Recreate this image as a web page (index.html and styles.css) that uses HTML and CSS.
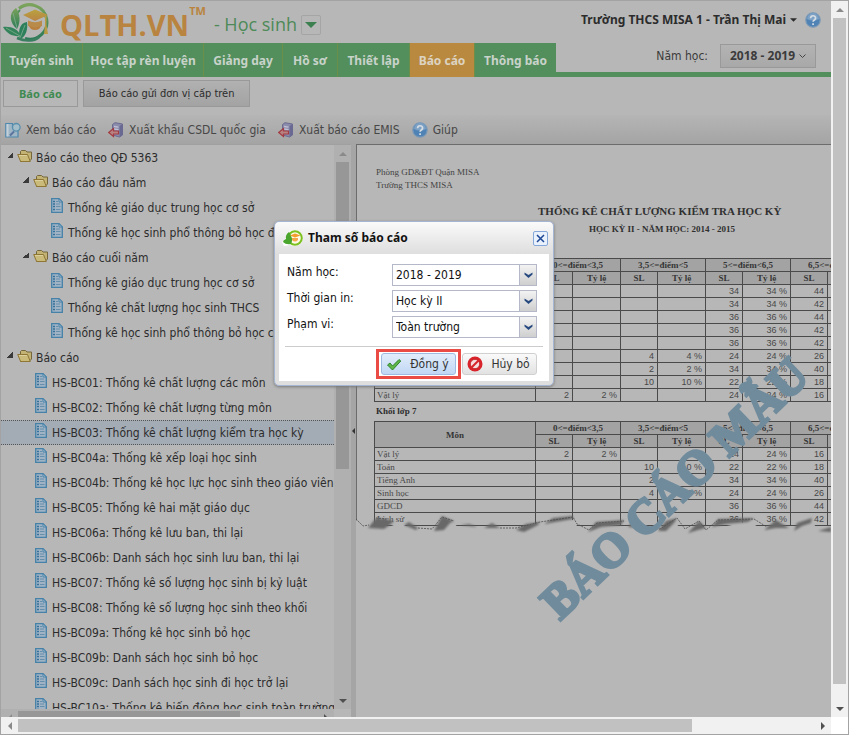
FILE: index.html
```html
<!DOCTYPE html>
<html lang="vi">
<head>
<meta charset="utf-8">
<title>QLTH.VN - Báo cáo</title>
<link rel="stylesheet" href="styles.css">
</head>
<body>
<svg class="defs" aria-hidden="true">
  <symbol id="folder" viewBox="0 0 16 14">
    <path d="M3.5 11.5V2.5L4.500 1.500H8.500L10 3H14.500V10L12 12.500H3.500z" fill="#c2b375" stroke="#75673b"/>
    <path d="M.7 5.500H10.500L13.300 12.500H3.600z" fill="#cbbb7a" stroke="#8f7634"/>
    <path d="M2 6.500H10" stroke="#dbd09c"/>
  </symbol>
  <symbol id="doc" viewBox="0 0 12 15">
    <path d="M.7.7H8L11.300 4V14.300H.7z" fill="#9fb3c4" stroke="#4681a8" stroke-width="1.300"/>
    <path d="M8 .7V4H11.300z" fill="#b5c4d0" stroke="#4681a8"/>
    <path d="M2 3.500H4M2 6H4M2 8.500H4M2 11.500H4" stroke="#37719b" stroke-width="1.500"/>
    <path d="M5 3.500H7M5 6H9M5 8.500H9.500M5 11.500H9.500" stroke="#668fac"/>
  </symbol>
  <symbol id="help" viewBox="0 0 16 16">
    <circle cx="8" cy="8" r="7.200" fill="#5083b5" stroke="#7998b6" stroke-width="1.200"/>
    <path d="M2 7a6 6 0 0 1 12 0q-6 3-12 0z" fill="#7ca1c4"/>
    <path d="M5.600 6.200c0-3.300 5-3.200 5-.2 0 2-2.500 1.900-2.500 3.800M8.100 11.300v1.700" fill="none" stroke="#d5dce3" stroke-width="1.700"/>
  </symbol>
  <symbol id="export" viewBox="0 0 16 16">
    <path d="M4.500 2.500L7 .7 14.500 2V13L11.500 15 4.500 13z" fill="#8b8cac" stroke="#6b6a91"/>
    <path d="M11.500 4V15L14.500 13V2z" fill="#696993"/>
    <path d="M6 4.500L10.500 5.200M6 7L10.500 7.700" stroke="#c0c0d4" stroke-width="1.300"/>
    <path d="M.7 10.500L5.500 6.500V9H10.500V12H5.500V14.500z" fill="#b98383" stroke="#a33c42" stroke-width="1.200"/>
  </symbol>
  <symbol id="view" viewBox="0 0 16 16">
    <path d="M.8 1.500H7.500V5.500H9.500L13 9V15H.8z" fill="#9fb6c6" stroke="#4f88ae" stroke-width="1.200"/>
    <path d="M2.500 2V14.500" stroke="#c3d0d8" stroke-width="2"/>
    <path d="M9 9.500L5 13.500" stroke="#5b739d" stroke-width="2"/>
    <circle cx="11.300" cy="5.300" r="3.800" fill="#a3bdc9" stroke="#598fac" stroke-width="1.300"/>
  </symbol>
  <symbol id="down" viewBox="0 0 8 4"><path d="M0 0H8L4 4z" fill="currentColor"/></symbol>
</svg>

<div class="window">
  <main class="app">
    <header class="top">
      <div class="brand">
        <svg class="logo" viewBox="0 0 50 40" aria-hidden="true">
          <defs><linearGradient id="lg" x1="0" y1="0" x2="0" y2="1"><stop offset="0" stop-color="#7ba35a"/><stop offset="1" stop-color="#2b7a59"/></linearGradient>
          <linearGradient id="cap" x1="0" y1="0" x2="0" y2="1"><stop offset="0" stop-color="#b9a23f"/><stop offset="1" stop-color="#b98445"/></linearGradient></defs>
          <path d="M16 5.500A17.200 17.200 0 1 1 22 35.500" fill="none" stroke="url(#lg)" stroke-width="3"/>
          <path d="M17 7Q10 13 13 24" fill="none" stroke="#4d8f58" stroke-width="2"/>
          <path d="M13 5C5 10 7 21 14 26 18 19 17 10 13 5z" fill="url(#lg)"/>
          <path d="M24 19C16 20 15 29 17 36 23 34 25 26 24 19z" fill="#2d805c"/>
          <path d="M0 24C8 23 15 26 18 33 10 34 4 31 0 24z" fill="#34845b"/>
          <path d="M10 10L14 25M22 22L17 35M3 25L17 33" stroke="#8db395" stroke-width=".7" fill="none"/>
          <path d="M14 35C23 39 32 38 36 34" fill="none" stroke="#3a7f60" stroke-width="2.500"/>
          <path d="M20 12L32 6.500 45 12 32 18z" fill="url(#cap)"/>
          <path d="M25 17.500Q32 21 39 17.500V23Q32 26 25 23z" fill="#b98b4b"/>
          <path d="M26 22.500Q32 26 38 22.500 37 27 32 27 27 27 26 22.500z" fill="#b8803f"/>
          <path d="M42 13V22L41 31H45L43.500 22V13z" fill="#b99a45"/>
        </svg>
        <span class="brand-name">QLTH.VN</span><span class="tm">TM</span>
        <span class="brand-module">- Học sinh</span>
        <button class="module-btn" aria-label="Chọn phân hệ"><svg class="module-caret"><use href="#down"/></svg></button>
      </div>
      <div class="user">
        <b>Trường THCS MISA 1 - Trần Thị Mai</b>
        <svg class="user-caret"><use href="#down"/></svg>
        <svg class="i16 user-help"><use href="#help"/></svg>
      </div>
    </header>
    <div class="nav-row">
      <nav class="nav">
        <a href="#">Tuyển sinh</a><a href="#">Học tập rèn luyện</a><a href="#">Giảng dạy</a><a href="#">Hồ sơ</a><a href="#">Thiết lập</a><a href="#" class="active">Báo cáo</a><a href="#">Thông báo</a>
      </nav>
      <div class="year">
        <span>Năm học:</span>
        <button class="year-btn">2018 - 2019
          <svg class="chev" viewBox="0 0 7 5"><path d="M.5.500L3.500 3.500 6.500.5" fill="none" stroke="#444"/></svg></button>
      </div>
    </div>
    <div class="subtabs">
      <button class="subtab current">Báo cáo</button>
      <button class="subtab">Báo cáo gửi đơn vị cấp trên</button>
    </div>
    <div class="toolbar">
      <button><svg class="i16"><use href="#view"/></svg>Xem báo cáo</button>
      <button><svg class="i16"><use href="#export"/></svg>Xuất khẩu CSDL quốc gia</button>
      <button><svg class="i16"><use href="#export"/></svg>Xuất báo cáo EMIS</button>
      <button><svg class="i16"><use href="#help"/></svg>Giúp</button>
    </div>

    <div class="content">
      <div class="tree-panel">
        <ul class="tree">
          <li class="node open"><svg class="folder"><use href="#folder"/></svg>Báo cáo theo QĐ 5363</li>
          <li class="node open l1"><svg class="folder"><use href="#folder"/></svg>Báo cáo đầu năm</li>
          <li class="node l2"><svg class="doc"><use href="#doc"/></svg>Thống kê giáo dục trung học cơ sở</li>
          <li class="node l2"><svg class="doc"><use href="#doc"/></svg>Thống kê học sinh phổ thông bỏ học đ</li>
          <li class="node open l1"><svg class="folder"><use href="#folder"/></svg>Báo cáo cuối năm</li>
          <li class="node l2"><svg class="doc"><use href="#doc"/></svg>Thống kê giáo dục trung học cơ sở</li>
          <li class="node l2"><svg class="doc"><use href="#doc"/></svg>Thống kê chất lượng học sinh THCS</li>
          <li class="node l2"><svg class="doc"><use href="#doc"/></svg>Thống kê học sinh phổ thông bỏ học c</li>
          <li class="node open"><svg class="folder"><use href="#folder"/></svg>Báo cáo</li>
          <li class="node leaf"><svg class="doc"><use href="#doc"/></svg>HS-BC01: Thống kê chất lượng các môn</li>
          <li class="node leaf"><svg class="doc"><use href="#doc"/></svg>HS-BC02: Thống kê chất lượng từng môn</li>
          <li class="node leaf selected"><svg class="doc"><use href="#doc"/></svg>HS-BC03: Thống kê chất lượng kiểm tra học kỳ</li>
          <li class="node leaf"><svg class="doc"><use href="#doc"/></svg>HS-BC04a: Thống kê xếp loại học sinh</li>
          <li class="node leaf"><svg class="doc"><use href="#doc"/></svg>HS-BC04b: Thống kê học lực học sinh theo giáo viên</li>
          <li class="node leaf"><svg class="doc"><use href="#doc"/></svg>HS-BC05: Thống kê hai mặt giáo dục</li>
          <li class="node leaf"><svg class="doc"><use href="#doc"/></svg>HS-BC06a: Thống kê lưu ban, thi lại</li>
          <li class="node leaf"><svg class="doc"><use href="#doc"/></svg>HS-BC06b: Danh sách học sinh lưu ban, thi lại</li>
          <li class="node leaf"><svg class="doc"><use href="#doc"/></svg>HS-BC07: Thống kê số lượng học sinh bị kỷ luật</li>
          <li class="node leaf"><svg class="doc"><use href="#doc"/></svg>HS-BC08: Thống kê số lượng học sinh theo khối</li>
          <li class="node leaf"><svg class="doc"><use href="#doc"/></svg>HS-BC09a: Thống kê học sinh bỏ học</li>
          <li class="node leaf"><svg class="doc"><use href="#doc"/></svg>HS-BC09b: Danh sách học sinh bỏ học</li>
          <li class="node leaf"><svg class="doc"><use href="#doc"/></svg>HS-BC09c: Danh sách học sinh đi học trở lại</li>
          <li class="node leaf"><svg class="doc"><use href="#doc"/></svg>HS-BC10a: Thống kê biến động học sinh toàn trường</li>
        </ul>
        <div class="vbar dim"><i class="arrow up"></i><i class="thumb"></i><i class="arrow down"></i></div>
        <div class="hbar dim"><i class="arrow left"></i><i class="thumb"></i><i class="arrow right"></i></div>
      </div>
      <div class="splitter"><i class="arrow left"></i></div>
      <section class="report">
        <div class="paper">
          <p class="org">Phòng GD&amp;ĐT Quận MISA<br>Trường THCS MISA</p>
          <h1>THỐNG KÊ CHẤT LƯỢNG KIỂM TRA HỌC KỲ</h1>
          <h2>HỌC KỲ II - NĂM HỌC: 2014 - 2015</h2>
          <table class="marks">
            <colgroup><col class="c-name"><col class="c-sl"><col class="c-pc"><col class="c-sl"><col class="c-pc"><col class="c-sl"><col class="c-pc"><col class="c-sl"><col class="c-pc"></colgroup>
            <thead>
              <tr><th rowspan="2"></th><th colspan="2">0&lt;=điểm&lt;3,5</th><th colspan="2">3,5&lt;=điểm&lt;5</th><th colspan="2">5&lt;=điểm&lt;6,5</th><th colspan="2">6,5&lt;=điểm&lt;8</th></tr>
              <tr><th>SL</th><th>Tỷ lệ</th><th>SL</th><th>Tỷ lệ</th><th>SL</th><th>Tỷ lệ</th><th>SL</th><th></th></tr>
            </thead>
            <tbody>
              <tr><td></td><td></td><td></td><td></td><td></td><td>34</td><td>34 %</td><td>44</td><td></td></tr>
              <tr><td></td><td></td><td></td><td></td><td></td><td>34</td><td>34 %</td><td>42</td><td></td></tr>
              <tr><td></td><td></td><td></td><td></td><td></td><td>36</td><td>36 %</td><td>44</td><td></td></tr>
              <tr><td></td><td></td><td></td><td></td><td></td><td>36</td><td>36 %</td><td>42</td><td></td></tr>
              <tr><td></td><td></td><td></td><td></td><td></td><td>36</td><td>36 %</td><td>42</td><td></td></tr>
              <tr><td></td><td></td><td></td><td>4</td><td>4 %</td><td>24</td><td>24 %</td><td>26</td><td></td></tr>
              <tr><td></td><td></td><td></td><td>2</td><td>2 %</td><td>34</td><td>34 %</td><td>40</td><td></td></tr>
              <tr><td></td><td></td><td></td><td>10</td><td>10 %</td><td>22</td><td>22 %</td><td>18</td><td></td></tr>
              <tr><td>Vật lý</td><td>2</td><td>2 %</td><td></td><td></td><td>24</td><td>24 %</td><td>16</td><td></td></tr>
            </tbody>
          </table>
          <h3>Khối lớp 7</h3>
          <table class="marks">
            <colgroup><col class="c-name"><col class="c-sl"><col class="c-pc"><col class="c-sl"><col class="c-pc"><col class="c-sl"><col class="c-pc"><col class="c-sl"><col class="c-pc"></colgroup>
            <thead>
              <tr><th rowspan="2">Môn</th><th colspan="2">0&lt;=điểm&lt;3,5</th><th colspan="2">3,5&lt;=điểm&lt;5</th><th colspan="2">5&lt;=điểm&lt;6,5</th><th colspan="2">6,5&lt;=điểm&lt;8</th></tr>
              <tr><th>SL</th><th>Tỷ lệ</th><th>SL</th><th>Tỷ lệ</th><th>SL</th><th>Tỷ lệ</th><th>SL</th><th></th></tr>
            </thead>
            <tbody>
              <tr><td>Vật lý</td><td>2</td><td>2 %</td><td></td><td></td><td>24</td><td>24 %</td><td>16</td><td></td></tr>
              <tr><td>Toán</td><td></td><td></td><td>10</td><td>10 %</td><td>22</td><td>22 %</td><td>18</td><td></td></tr>
              <tr><td>Tiếng Anh</td><td></td><td></td><td>2</td><td></td><td>34</td><td>34 %</td><td>40</td><td></td></tr>
              <tr><td>Sinh học</td><td></td><td></td><td>4</td><td>4 %</td><td>24</td><td>24 %</td><td>26</td><td></td></tr>
              <tr><td>GDCD</td><td></td><td></td><td></td><td></td><td>36</td><td>36 %</td><td>44</td><td></td></tr>
              <tr><td>Lịch sử</td><td></td><td></td><td></td><td></td><td>36</td><td>36 %</td><td>42</td><td></td></tr>
            </tbody>
          </table>
          <svg class="tear" viewBox="0 0 475 22" preserveAspectRatio="none" aria-hidden="true">
            <defs><filter id="soft" x="-5%" y="-50%" width="110%" height="200%"><feGaussianBlur stdDeviation="1"/></filter></defs>
            <path d="M0 6L8 13 17 12 24 8 32 13 44 9 50 12 62 16 76 15 84 12 88 5 96 8 102 13 118 12 130 14 140 13 150 16 164 16 178 10 190 11 204 7 217 6 221 12 234 17 246 11 264 12 278 13 292 14 304 17 312 13 318 8 328 17 340 13 348 17 360 14 376 11 392 7 406 15 418 12 432 17 445 10 456 9 464 16 475 16V22H0z" fill="#b7b7b7"/>
            <path d="M12 14L20 4 30 5 38 7 35 10 28 15zM48 11L53 8 62 14 60 16zM78 17L86 2 98 7 94 9 88 16zM104 11L113 10 122 13zM128 14L136 9 144 14zM160 16L170 10 184 8 182 11 168 18zM188 10L197 4 217 2 217 5zM232 18L240 8 268 6 265 11 245 13zM272 13L275 9 285 14zM302 17L310 7 321 4 318 9 310 17zM332 19L343 7 350 14 342 16zM356 13L362 5 398 4 392 8 370 10zM408 16L420 6 433 14 420 14zM438 17L441 9 456 4 455 9 446 12zM462 17L475 13V18z" fill="#686868" filter="url(#soft)"/>
            <path d="M0 5L7 12 13 11M20 4L30 5M62 14L76 15 86 3 98 7M144 14L160 14 184 8 217 3 221 10 233 16 241 9 268 7M285 14L304 15 321 4 329 15 343 7 350 16 362 6 398 5 411 13" fill="none" stroke="#4c4c4c" stroke-width=".8" stroke-dasharray="2 1"/>
          </svg>
          <svg class="watermark" viewBox="0 0 340 340" aria-hidden="true">
            <text x="39" y="274" transform="rotate(-44 39 274)">BÁO CÁO MẪU</text>
          </svg>
        </div>
      </section>
    </div>

    <form class="dialog" role="dialog" aria-labelledby="dlg-title">
      <div class="dlg-head">
        <svg class="dlg-logo" viewBox="0 0 22 18" aria-hidden="true">
          <path d="M8 2Q15-1 19 4 23 12 17 16 12 18 8 16L2 17 0 13 4 9z" fill="#fff"/>
          <circle cx="13" cy="9" r="6.800" fill="#fdfbe8" stroke="#7cc120" stroke-width="2"/>
          <path d="M7 3Q3 6 4 10 1 11 1 13 4 16 9 15 12 10 7 3z" fill="#4aa52c"/>
          <path d="M8 6.500L13 4.500 18.500 6.500 13 8.500z" fill="#f39b2b"/>
          <path d="M10 9H16V11Q13 14 10 11z" fill="#f6a94c"/>
        </svg>
        <b id="dlg-title">Tham số báo cáo</b>
        <button type="button" class="close" aria-label="Đóng"><svg viewBox="0 0 9 9"><path d="M1 1L8 8M8 1L1 8" stroke="#1c4795" stroke-width="1.500"/></svg></button>
      </div>
      <div class="dlg-body">
        <div class="fields">
          <label for="f-year">Năm học:</label>
          <div class="combo"><select id="f-year"><option>2018 - 2019</option></select><i class="trigger"><svg viewBox="0 0 9 6"><path d="M.5.500L4.500 3 8.500.5V2.500L4.500 6 .5 2.500z" fill="#284a80"/></svg></i></div>
          <label for="f-term">Thời gian in:</label>
          <div class="combo"><select id="f-term"><option>Học kỳ II</option></select><i class="trigger"><svg viewBox="0 0 9 6"><path d="M.5.500L4.500 3 8.500.5V2.500L4.500 6 .5 2.500z" fill="#284a80"/></svg></i></div>
          <label for="f-scope">Phạm vi:</label>
          <div class="combo"><select id="f-scope"><option>Toàn trường</option></select><i class="trigger"><svg viewBox="0 0 9 6"><path d="M.5.500L4.500 3 8.500.5V2.500L4.500 6 .5 2.500z" fill="#284a80"/></svg></i></div>
        </div>
        <div class="actions">
          <span class="marked"><button type="button" class="btn ok"><svg class="i16" viewBox="0 0 16 16"><path d="M1.500 9L4 7 6.500 10 13 3.500 14.800 5 6.500 14z" fill="#5fb548" stroke="#2f8530"/></svg><span>Đồng ý</span></button></span>
          <button type="button" class="btn"><svg class="i16" viewBox="0 0 16 16"><circle cx="8" cy="8" r="7.500" fill="#d8232a"/><circle cx="8" cy="8" r="4.600" fill="#f6dede" stroke="#b3131b" stroke-width=".6"/><path d="M4.500 11.500L11.500 4.500" stroke="#d8232a" stroke-width="2"/></svg><span>Hủy bỏ</span></button>
        </div>
      </div>
    </form>
  </main>
  <div class="vbar page-v"><i class="arrow up"></i><i class="thumb"></i><i class="arrow down"></i></div>
  <div class="hbar page-h"><i class="arrow left"></i><i class="thumb"></i><i class="arrow right"></i></div>
</div>
</body>
</html>
```
FILE: styles.css
```css
* { box-sizing: border-box; }
body { margin: 0; font: 12px/16px "DejaVu Sans Condensed", "Noto Sans", sans-serif; color: #2c2c2c; }
b, .nav a, .year-btn, .current { font-family: "Noto Sans", sans-serif; font-weight: bold; }
button { font: inherit; color: inherit; margin: 0; padding: 0; border: 0; background: none; }
.defs { display: none; }
.i16 { width: 16px; height: 16px; flex: none; }

.window { height: 100vh; display: grid; grid-template-columns: minmax(0, 1fr) 17px; grid-template-rows: minmax(0, 1fr) 17px; border: 1px solid #a3a3a3; background: #fff; overflow: hidden; }
.app { position: relative; display: flex; flex-direction: column; background: #b7b7b7; min-height: 0; }

.top { height: 42px; display: flex; justify-content: space-between; flex: none; }
.brand { display: flex; align-items: center; }
.logo { width: 50px; height: 40px; margin: 2px 7px 0 2px; }
.brand-name { font: bold 29px/40px "Open Sans", sans-serif; color: #b98440; margin-top: 5px; }
.tm { align-self: flex-start; font: bold 11px/12px "Open Sans", sans-serif; color: #b98440; margin: 4px 8px 0 0; }
.brand-module { font: 18px/24px "Open Sans", sans-serif; color: #4d8a58; margin-top: 4px; }
.module-btn { width: 20px; height: 20px; margin: 6px 0 0 4px; border: 1px solid #a5a5a5; border-radius: 2px; display: grid; place-items: center; color: #3c8050; }
.module-caret { width: 12px; height: 6px; }
.user { display: flex; align-items: center; padding: 0 10px 4px 0; gap: 4px; }
.user-caret { width: 7px; height: 4px; }
.user-help { margin-left: 4px; }

.nav-row { height: 34px; display: flex; justify-content: space-between; border-bottom: 5px solid #538e5d; flex: none; }
.nav { height: 34px; display: grid; grid-template-columns: 81px 121px 79px 55px 72px 65px 82px; }
.nav a { display: grid; place-items: center; padding-top: 2px; background: #538e5d; border-left: 1px solid #6b8f48; color: #c8d3ca; text-decoration: none; white-space: nowrap; }
.nav a:first-child { border-left: 0; }
.nav .active { background: #b8893e; color: #ddd3c2; }
.year { display: flex; align-items: center; gap: 12px; padding: 0 15px 3px 0; color: #3b3b3b; }
.year-btn { width: 96px; height: 24px; border: 1px solid #999; background: linear-gradient(#b3b3b3, #a8a8a8); display: flex; align-items: center; justify-content: center; gap: 4px; }
.chev { width: 7px; height: 5px; }

.subtabs { height: 38px; display: flex; gap: 5px; padding: 3px 2px 0; flex: none; }
.subtab { height: 27px; padding: 0 15px; border: 1px solid #999; background: linear-gradient(#b1b1b1, #a3a3a3); font-size: 11px; }
.current { background: #b7b7b7; color: #3f8a52; }
.toolbar { height: 29px; display: flex; gap: 12px; padding: 0 4px; background: linear-gradient(#b5b5b5, #a4a4a4); color: #474747; flex: none; }
.toolbar button { display: flex; align-items: center; gap: 5px; font-size: 12px; }

.content { flex: 1; min-height: 0; display: grid; grid-template-columns: 350px 5px minmax(0, 1fr); }
.tree-panel { display: grid; grid-template-columns: minmax(0, 1fr) 17px; grid-template-rows: minmax(0, 1fr) 8px; border-top: 1px solid #a0a0a0; min-height: 0; }
.tree { list-style: none; margin: 0; padding: 0; overflow: hidden; }
.node { height: 25px; padding: 1px 0 0 6px; display: flex; align-items: center; white-space: nowrap; }
.node::before { content: ""; width: 6px; height: 6px; margin: 0 4px 6px 0; flex: none; }
.open::before { background: linear-gradient(135deg, transparent 50%, #3a3a3a 50%); }
.l1 { padding-left: 22px; }
.l2 { padding-left: 40px; }
.leaf { padding-left: 24px; }
.folder { width: 16px; height: 14px; margin: 0 3px 5px 0; flex: none; }
.doc { width: 12px; height: 15px; margin: 0 5px 5px 0; flex: none; }
.selected { background: #a3abb5; border: dotted #555; border-width: 1px 0; }

.vbar, .hbar { display: grid; background: #f1f1f1; overflow: hidden; }
.vbar { padding: 0 2px; }
.hbar { padding: 2px 0; }
.thumb { background: #c1c1c1; }
.vbar .arrow.down { grid-row: 4; }
.hbar .arrow.right { grid-column: 4; }
.page-v { grid-template-rows: 17px 666fr 16fr 17px; }
.page-h { grid-template-columns: 17px 674fr 122fr 17px; }
.dim { background: #b0b0b0; }
.dim .thumb { background: #979797; }
.vbar.dim { grid-template-rows: 17px 307fr 223fr 17px; }
.hbar.dim { grid-column: 1; grid-template-columns: 17px 223fr 77fr 17px; padding-bottom: 0; grid-template-rows: 13px; }
.arrow { width: 0; height: 0; border: 4px solid transparent; place-self: center; }
.up { border-top: 0; border-bottom-color: #8a8a8a; }
.down { border-bottom: 0; border-top-color: #505050; }
.left { border-left: 0; border-right-color: #8a8a8a; }
.right { border-right: 0; border-left-color: #505050; }
.splitter { background: #a5a5a5; display: grid; }
.splitter .arrow { border-width: 3px; border-left: 0; border-right-color: #333; }

.report { min-width: 0; overflow: hidden; }
.paper { position: relative; padding: 21px 0 0 17px; height: 386px; border: solid #6c6c6c; border-width: 1px 0 0 1px; font-family: "Liberation Serif", serif; }
.paper p, .paper h1, .paper h2, .paper h3 { margin: 0; white-space: nowrap; }
.paper .org { font-size: 9px; line-height: 13px; padding-left: 2px; color: #444; }
.paper h1 { font-size: 11px; line-height: 18px; margin: 10px 0 0 164px; color: #303030; }
.paper h2 { font-size: 9px; line-height: 18px; margin-left: 215px; color: #303030; }
.paper h3 { font-size: 9px; line-height: 19px; padding-left: 2px; }
.marks { width: 500px; table-layout: fixed; border-collapse: collapse; font-size: 9px; line-height: 10px; }
.paper h2 + .marks { margin-top: 20px; }
.marks th, .marks td { height: 13px; padding: 0 3px; border: 1px solid #4a4a4a; white-space: nowrap; overflow: hidden; }
.marks th { background: #a3a3a3; color: #353535; padding: 0; }
.marks td { text-align: right; font-family: "Liberation Sans", sans-serif; color: #484848; }
.marks td:first-child { text-align: left; padding-left: 2px; font-family: "Liberation Serif", serif; }
.c-name { width: 161px; }
.c-sl { width: 37px; }
.c-pc { width: 48px; }
.tear { position: absolute; left: -1px; bottom: -6px; width: 475px; height: 22px; }
.watermark { position: absolute; left: 164px; top: 202px; width: 340px; height: 340px; overflow: visible; }
.watermark text { font: bold 48px "Liberation Serif", serif; fill: #708b9c; stroke: #708b9c; stroke-width: 3px; }

.dialog { position: absolute; left: 273px; top: 220px; width: 280px; padding: 0 4px 4px; border: 1px solid #a4b5d2; border-radius: 5px; background: linear-gradient(#fafafa, #dedede 32px, #dedede); box-shadow: 0 1px 3px #777; color: #111; }
.dlg-head { height: 32px; display: flex; align-items: center; gap: 4px; padding: 0 1px 0 3px; }
.dlg-logo { width: 22px; height: 18px; }
.close { width: 15px; height: 15px; margin-left: auto; border: 1px solid #86a8d8; background: #e9f1fc; border-radius: 2px; display: grid; place-items: center; }
.close svg { width: 9px; height: 9px; }
.dlg-body { background: #fff; padding: 10px 6px 2px; }
.fields { display: grid; grid-template-columns: 105px 145px; row-gap: 4px; padding: 0 2px 8px; border-bottom: 1px solid #ccc; }
.combo { display: grid; grid-template-columns: 1fr 18px; height: 22px; }
.combo select { grid-area: 1 / 1 / 2 / 3; appearance: none; font: inherit; color: #111; border: 1px solid #b5b8c8; background: #fff; padding: 0 3px; margin: 0; border-radius: 0; }
.trigger { grid-area: 1 / 2; border: 1px solid #b5b8c8; background: linear-gradient(#f3f3f3, #cfcfcf); display: grid; place-items: center; pointer-events: none; }
.trigger svg { width: 9px; height: 6px; }
.actions { display: flex; justify-content: flex-end; align-items: center; gap: 1px; padding: 2px 6px 0 0; }
.marked { border: 3px solid #ea4b45; padding: 1px 2px; }
.btn { width: 75px; height: 22px; padding: 0 4px; border: 1px solid #d0d0d0; border-radius: 3px; background: linear-gradient(#fafafa, #e2e2e2); display: grid; grid-template-columns: 16px 1fr; align-items: center; text-align: center; color: #333; }
.btn span { padding-left: 6px; white-space: nowrap; }
.ok { border-color: #9ebae1; background: linear-gradient(#e2edfb, #c0d7f4); }
```
